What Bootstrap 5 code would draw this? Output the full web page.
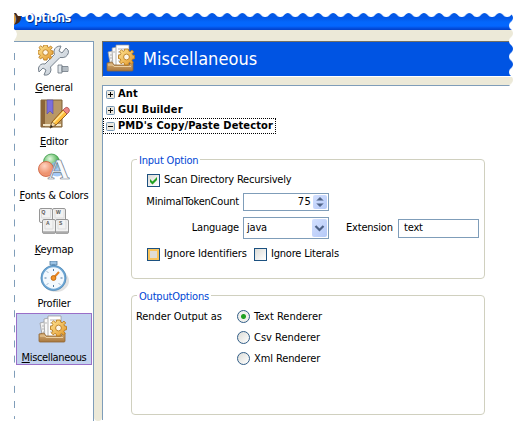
<!DOCTYPE html>
<html lang="en">
<head>
<meta charset="utf-8">
<title>Options</title>
<link rel="stylesheet" href="https://cdn.jsdelivr.net/npm/bootstrap@5.3.0/dist/css/bootstrap.min.css">
<style>
body{width:526px;height:435px;overflow:hidden;background:#fff;color:#000;font:11px/16px "DejaVu Sans Condensed","DejaVu Sans",sans-serif;font-stretch:condensed;letter-spacing:-.2px}
.window{width:513px;height:422px;padding-left:14px}
.titlebar{height:30px;padding:10px 0 0 11px;background:linear-gradient(#fff 13px,#0358e4 13px,#0358e8 18px,#0467fb 22px,#0467ff 26px,#0450e0 28px,#0340c8 30px);color:#fff;font:bold 12px/16px "DejaVu Sans Condensed","DejaVu Sans",sans-serif;text-shadow:1px 1px #032e80}
.strip{height:11px;background:#ece9d8}
.sidebar{width:80px;height:380px;border-top:1px solid #7f9db9;border-right:1px solid #7f9db9;padding:1px 1px 0 2px}
.entry{height:52px;margin-bottom:2px;border:1px solid transparent;text-align:center;white-space:nowrap}
.entry svg{display:block;width:32px;height:32px;margin:1px auto 3px}
.entry.active{background:#c1d2ee;border-color:#9a6fc8}
.entry span{display:block;line-height:16px}
.tight{letter-spacing:-.35px}
u{text-underline-offset:1px;text-decoration-thickness:1px}
.gutter{width:8px;height:380px;background:#ece9d8;border-radius:0 0 4px 4px}
.banner{height:36px;background:#0054e3;border-top:1px solid #716f64;border-left:1px solid #716f64;border-bottom:1px solid #fff;color:#fff;font-size:18px;line-height:34px;padding-left:3px;letter-spacing:.05px}
.banner svg{width:32px;height:32px;margin-top:2px}
.banner span{margin-left:5px}
.under{height:8px;background:#ece9d8}
.content-pane{height:335px;border-top:1px solid #7f9db9;border-left:1px solid #7f9db9;background:#fff}
.tree{font-weight:bold;letter-spacing:.12px}
.branch{height:16px;padding-left:3px;gap:3px;width:173px;white-space:nowrap}
.branch.focused{outline:1px dotted #000;outline-offset:-1px}
.branch svg{width:9px;height:9px;flex:none}
.group{width:354px;height:120px;margin-left:28px;border:1px solid #d0d0bf;border-radius:4px}
.group-title{align-self:flex-start;margin:-7px 0 0 5px;padding:0 2px;line-height:15px;background:#fff;color:#0046d5;white-space:nowrap}
.line{white-space:nowrap}
.lbl{width:107px;text-align:right}
.field{border:1px solid #7f9db9;background:#fff}
.tick{width:13px;height:13px;border:1px solid #1c5180;background:linear-gradient(135deg,#dcdcd7,#fff);flex:none}
.tick svg{display:block;width:11px;height:11px}
.tick.hot{border-color:#1c5180;background:#e0ddd6;box-shadow:inset 0 0 0 2px #f9c45b}
.dot{width:13px;height:13px;border:1px solid #315d87;border-radius:50%;background:linear-gradient(135deg,#dcdcd7,#fff);flex:none}
.dot.on{background:radial-gradient(circle,#21a121 0 2px,#f0f0ec 3px)}
.btn-xp{background:linear-gradient(135deg,#d3e0fe,#b5c9f8);border-radius:2px}
.waves{position:absolute;left:0;top:0;pointer-events:none}
</style>
</head>
<body>
<svg class="position-absolute" width="0" height="0">
<defs>
<linearGradient id="gold" x2="1" y2="1"><stop stop-color="#ffe695"/><stop offset="1" stop-color="#e2962a"/></linearGradient>
<linearGradient id="wood" x2="0" y2="1"><stop stop-color="#d9b077"/><stop offset="1" stop-color="#a9783f"/></linearGradient>
<linearGradient id="steel" x2="1" y2="1"><stop stop-color="#fff"/><stop offset="1" stop-color="#b4bfca"/></linearGradient>
<symbol id="gear" viewBox="-9 -9 18 18">
<g fill="url(#gold)" stroke="#b97a1c" stroke-width=".9"><path d="M-1.8-8h3.6l.5 2.2 1.3.5L5.500-6.900 7.200-5 5.500-3.300 6-2 8-1.600V1.700L6 2.200 5.400 3.500 6.700 5.400 4.900 7 3.200 5.600 2 6.100 1.600 8h-3.400L-2.300 6-3.500 5.500-5.400 6.800-7.100 5-5.700 3.300-6.200 2-8 1.600v-3.400L-6.100-2.300-5.600-3.500-6.900-5.400-5-7.100-3.300-5.700-2.200-6.100Z"/><circle r="2.900" fill="#fff" fill-opacity=".85"/></g></symbol>
<symbol id="tray" viewBox="0 0 32 32">
<path d="M2 8l8-2 3 18-8 1Z" fill="#f1f1f1" stroke="#929292" stroke-width=".7"/>
<path d="M6 4l9-2 2 22-10 1Z" fill="#fafafa" stroke="#929292" stroke-width=".7"/>
<path d="M10 1h13v22H10Z" fill="#fff" stroke="#929292" stroke-width=".7"/>
<path d="M12 5h7M12 8h6M12 11h5M12 14h5M12 17h5M4 11h2M4 14h2M5 17h2M7 8h2" stroke="#b5b5b5"/>
<path d="M1 19l5-1 2 3h15l2-3h2v8q0 1-1 1H2q-1 0-1-1Z" fill="url(#wood)" stroke="#906432" stroke-width=".8"/>
<path d="M2 21h5l1 1.500h17" fill="none" stroke="#ecd0a3"/>
<use href="#gear" x="11.500" y="4" width="18" height="18"/></symbol>
<pattern id="wt" x="68.400" y="0" width="15.130" height="20" patternUnits="userSpaceOnUse"><path d="M0 0H15.130V17C11.300 17.200 11 13 7.560 13S3.800 17.200 0 17Z" fill="#fff"/></pattern>
<pattern id="wr" x="508" y="25.600" width="18" height="15.500" patternUnits="userSpaceOnUse"><path d="M18 0H1C1 4 5 4 5 7.750S1 11.500 1 15.500H18Z" fill="#fff"/></pattern>
</defs>
</svg>

<main class="window">
  <header class="titlebar">Options</header>
  <div class="strip"></div>
  <div class="d-flex">
    <nav class="sidebar">
      <div class="entry">
        <svg viewBox="0 0 32 32"><path d="M28 3l-4 5-3-2 2-5q-6 0-7 5 0 2 .500 3.500L7 19q-5-1-6.500 4 0 2 .500 4l4-4 3 2-2 5q6 1 7-5l-.500-3L22 12.500q7 1 8.500-5Q31 5 28 3Z" fill="url(#steel)" stroke="#76818c"/><use href="#gear" x="-1" y="-1" width="17" height="17"/><path d="M20 20h4v8h-4zM24 21.500h6v5h-6z" fill="#dfe5ea" stroke="#69747f" stroke-width=".8"/><path d="M26 22v4M28 22v4" stroke="#69747f" stroke-width=".7"/></svg>
        <span><u>G</u>eneral</span></div>
      <div class="entry">
        <svg viewBox="0 0 32 32"><path d="M3 1h21v27H3Z" fill="#b99866" stroke="#7c5e34"/><path d="M3 1h4v27H3Z" fill="#8b6538"/><path d="M5 26h18" stroke="#f1e4c6" stroke-width="2"/><path d="M9 1h6v14l-3-3-3 3Z" fill="#7c70dd" stroke="#5549a8" stroke-width=".6"/><path d="M12 29l2-6L25 11l4 4-11 11Z" fill="#ffbd3d" stroke="#8a5312" stroke-width=".9"/><path d="M15 24L26 12.500" stroke="#ffe898" stroke-width="1.500"/><path d="M25 11l2-2q2-1.500 3.500.2T31 13l-2 2Z" fill="#ed8785" stroke="#a9514d" stroke-width=".8"/><path d="M12 29l2-6 4 3Z" fill="#f1dab0" stroke="#6b4b25" stroke-width=".6"/><path d="M12 29l1-3 2 1.500Z" fill="#222"/></svg>
        <span><u>E</u>ditor</span></div>
      <div class="entry">
        <svg viewBox="0 0 32 32"><defs><radialGradient id="gr" cx=".4" cy=".3"><stop stop-color="#e4f9df"/><stop offset="1" stop-color="#55b45c"/></radialGradient><radialGradient id="rd" cx=".4" cy=".3"><stop stop-color="#ffd4c2"/><stop offset="1" stop-color="#ee9470"/></radialGradient></defs><circle cx="13.500" cy="9" r="8" fill="url(#gr)" stroke="#3b9b48" stroke-width=".8"/><circle cx="19" cy="16" r="7.500" fill="#8fbdf5" opacity=".8"/><circle cx="8" cy="16" r="7.500" fill="url(#rd)" stroke="#cb5c38" stroke-width=".8"/><text x="20.500" y="25.500" text-anchor="middle" font-family="Liberation Serif" font-weight="bold" font-size="30" letter-spacing="0" fill="#f8fafc" stroke="#6c7886" stroke-width=".7">A</text></svg>
        <span><u>F</u>onts &amp; Colors</span></div>
      <div class="entry">
        <svg viewBox="0 0 32 32" font-family="Liberation Sans" font-size="5" font-weight="bold" letter-spacing="0" fill="#555"><g fill="#f2f2f2" stroke="#969696"><rect x="1.500" y="1.500" width="13" height="14" rx="1.500"/><rect x="14.500" y="1.500" width="13" height="14" rx="1.500"/><rect x="4.500" y="12.500" width="13" height="14" rx="1.500"/><rect x="17.500" y="12.500" width="13" height="14" rx="1.500"/></g><path d="M5 25.500h12M18 25.500h12" stroke="#aaa" stroke-width="2.500"/><path d="M3.500 2v9h9V2M17 2v9h9V2M7 13v9h8v-9M20 13v9h8v-9" fill="none" stroke="#ddd"/><text x="3.500" y="6.500">Q</text><text x="18" y="6.500">W</text><text x="8" y="18">A</text><text x="21" y="18">S</text></svg>
        <span><u>K</u>eymap</span></div>
      <div class="entry">
        <svg viewBox="0 0 32 32"><ellipse cx="18" cy="20" rx="13" ry="11" fill="#e2e2e2"/><path d="M12 0h7v4h-7zM14 4h3v3h-3z" fill="#9ac2e4" stroke="#527ba0" stroke-width=".8"/><circle cx="15.500" cy="17" r="11.700" fill="#f3f9fe" stroke="#6ea7d5" stroke-width="2"/><circle cx="15.500" cy="17" r="12.600" fill="none" stroke="#477fac" stroke-width=".6"/><path d="M15.500 8v2M15.500 24v2M6.500 17h2M22.500 17h2M9 10.500l1 1M9 23.500l1-1M22 23.500l-1-1" stroke="#527ba0"/><path d="M15.500 17l5.500-6" stroke="#e48322" stroke-width="2"/><circle cx="15.500" cy="17" r="2.400" fill="#f19429" stroke="#c46a0f"/></svg>
        <span>Profiler</span></div>
      <div class="entry active">
        <svg><use href="#tray"/></svg>
        <span class="tight"><u>M</u>iscellaneous</span></div>
    </nav>
    <div class="gutter"></div>
    <section class="flex-grow-1">
      <div class="banner d-flex"><svg><use href="#tray"/></svg><span>Miscellaneous</span></div>
      <div class="under"></div>
      <div class="content-pane">
        <div class="tree">
          <div class="branch d-flex align-items-center"><svg viewBox="0 0 9 9"><rect x=".5" y=".5" width="8" height="8" rx="1" fill="#ece9e0" stroke="#7898b5"/><path d="M2 4.500h5M4.500 2v5" stroke="#000"/></svg>Ant</div>
          <div class="branch d-flex align-items-center"><svg viewBox="0 0 9 9"><rect x=".5" y=".5" width="8" height="8" rx="1" fill="#ece9e0" stroke="#7898b5"/><path d="M2 4.500h5M4.500 2v5" stroke="#000"/></svg>GUI Builder</div>
          <div class="branch focused d-flex align-items-center"><svg viewBox="0 0 9 9"><rect x=".5" y=".5" width="8" height="8" rx="1" fill="#ece9e0" stroke="#7898b5"/><path d="M2 4.500h5" stroke="#000"/></svg>PMD's Copy/Paste Detector</div>
        </div>
        <div class="group d-flex flex-column" style="margin-top:25px">
          <div class="group-title">Input Option</div>
          <div class="line d-flex align-items-center" style="height:16px;margin:4px 0 0 15px;gap:4px"><div class="tick"><svg viewBox="0 0 11 11"><path d="M2 4v3l2.500 2.500L9 5V2L4.500 6.500Z" fill="#21a121"/></svg></div>Scan Directory Recursively</div>
          <div class="line d-flex align-items-center" style="height:18px;margin-top:5px;gap:4px"><div class="lbl">MinimalTokenCount</div>
            <div class="field d-flex align-items-center justify-content-end" style="width:86px;height:18px;padding-right:1px"><span style="letter-spacing:.3px;margin-right:2px">75</span><svg class="btn-xp" width="14" height="14" viewBox="0 0 14 14"><path d="M4 5.500L7 2.500l3 3M4 8.500l3 3 3-3" fill="#4d6185" stroke="#4d6185"/></svg></div></div>
          <div class="line d-flex align-items-center" style="height:22px;margin-top:6px;gap:4px"><div class="lbl">Language</div>
            <div class="field d-flex align-items-center justify-content-between" style="width:86px;height:22px;padding:0 1px 0 3px"><span>java</span><svg class="btn-xp" width="15" height="18" viewBox="0 0 15 18"><path d="M3.500 7l4 4 4-4" fill="none" stroke="#4d6185" stroke-width="2.200"/></svg></div>
            <div style="margin-left:13px;width:48px">Extension</div>
            <div class="field" style="width:81px;height:19px;padding-left:5px">text</div></div>
          <div class="line d-flex align-items-center" style="height:16px;margin:7px 0 0 15px;gap:4px"><div class="tick hot"></div><span style="width:86px;letter-spacing:-.08px">Ignore Identifiers</span><div class="tick"></div><span>Ignore Literals</span></div>
        </div>
        <div class="group d-flex flex-column" style="margin-top:16px">
          <div class="group-title">OutputOptions</div>
          <div class="d-flex" style="margin:2px 0 0 4px">
            <div class="line" style="width:101px;line-height:21px;letter-spacing:-.08px">Render Output as</div>
            <div class="line" style="letter-spacing:0">
              <div class="d-flex align-items-center" style="height:21px;gap:4px"><div class="dot on"></div>Text Renderer</div>
              <div class="d-flex align-items-center" style="height:21px;gap:4px"><div class="dot"></div>Csv Renderer</div>
              <div class="d-flex align-items-center" style="height:21px;gap:4px;letter-spacing:-.1px"><div class="dot"></div>Xml Renderer</div>
            </div>
          </div>
        </div>
      </div>
    </section>
  </div>
</main>
<svg class="waves" width="526" height="435">
  <path d="M14 13q7 0 7 5t-7 7q5-6 0-12Z" fill="#4b2a16"/><path d="M14 13q4 6 0 12Z" fill="#e8a13a"/>
  <rect x="22" width="504" height="18" fill="url(#wt)"/><path d="M14 10h8v6h-4Z" fill="#fff"/>
  <rect x="508" y="13" width="18" height="73" fill="url(#wr)"/>
  <path d="M14 29q3 2 3 5t-3 7Z" fill="#fff"/>
  <path d="M14.500 53V419" stroke="#7f9db9" stroke-dasharray="7 8.130"/>
</svg>
<script src="https://cdn.jsdelivr.net/npm/bootstrap@5.3.0/dist/js/bootstrap.bundle.min.js"></script>
</body>
</html>
